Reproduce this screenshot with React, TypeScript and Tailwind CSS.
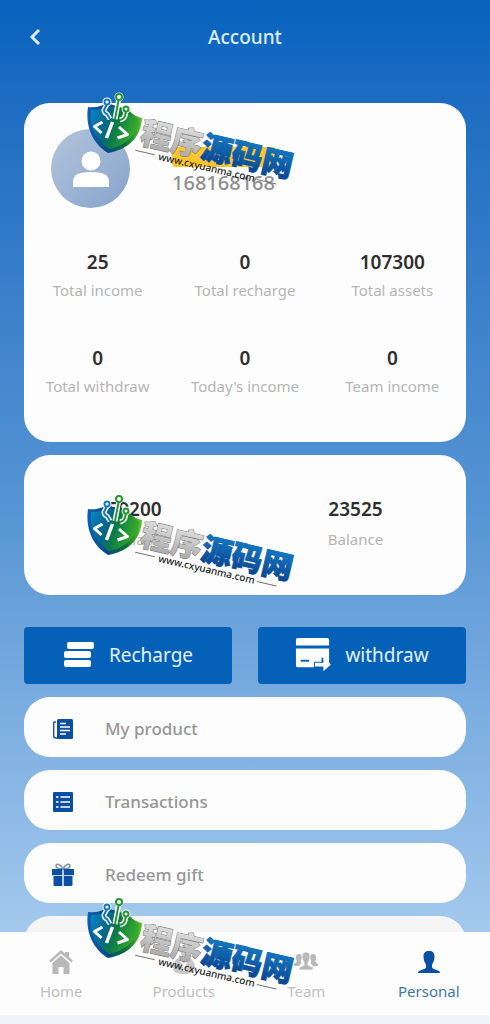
import { useId } from "react";

const stats = [
  { value: "25", label: "Total income" },
  { value: "0", label: "Total recharge" },
  { value: "107300", label: "Total assets" },
  { value: "0", label: "Total withdraw" },
  { value: "0", label: "Today's income" },
  { value: "0", label: "Team income" },
];

const balances = [
  { value: "59200", label: "Available" },
  { value: "23525", label: "Balance" },
];

function AvatarIcon() {
  return (
    <svg className="h-10 w-10" viewBox="0 0 40 40" fill="white">
      <circle cx="20" cy="12" r="9.5" />
      <path d="M2 38v-5c0-8 7-10 18-10s18 2 18 10v5z" />
    </svg>
  );
}

function RechargeIcon() {
  return (
    <svg className="h-8 w-8" viewBox="0 0 32 32" fill="white">
      <rect x="4" y="2" width="27" height="7" rx="2" />
      <rect x="1" y="11" width="27" height="7" rx="2" />
      <rect x="1" y="20" width="27" height="7" rx="2" />
    </svg>
  );
}

function WithdrawIcon() {
  return (
    <svg className="h-9 w-9" viewBox="0 0 38 36">
      <path d="M1 1q0-2 2-2h31q2 0 2 2v6H1z" fill="white" />
      <path d="M1 10h35v17H21v3H3q-2 0-2-2z" fill="white" />
      <path d="M6 23h9" stroke="#0560b8" strokeWidth="2" />
      <path d="M20 31v-7h8v-5l9 8-9 7v-3z" fill="#0560b8" />
      <path d="M21 29v-4h9v-5l8 7-8 7v-5z" fill="white" />
    </svg>
  );
}

function ProductIcon() {
  return (
    <svg className="h-5 w-5" viewBox="0 0 20 20">
      <path d="M3 3H1.500Q.7 3 .7 4v13q0 2 2 2H5" fill="none" stroke="#0b4fa3" strokeWidth="1.300" />
      <rect x="4" y="0" width="16" height="20" rx="1.500" fill="#0b4fa3" />
      <path d="M7 4.500h6M7 8h10M7 11.500h10M7 15h6" stroke="white" strokeWidth="1.300" />
    </svg>
  );
}

function ListIcon() {
  return (
    <svg className="h-5 w-5" viewBox="0 0 20 20">
      <rect x="0" y="0" width="20" height="20" rx="1" fill="#0b4fa3" />
      <path d="M3 5h2.500M7.500 5H17M3 10h2.500M7.500 10H17M3 15h2.500M7.500 15H17" stroke="white" strokeWidth="1.500" />
    </svg>
  );
}

function GiftIcon() {
  return (
    <svg className="h-6 w-6" viewBox="0 0 24 24">
      <path d="M12 6C10 1 5 0 5 3s4 3 7 3c3 0 7 0 7-3s-5-2-7 3z" fill="none" stroke="#7d93ad" strokeWidth="1.500" />
      <path d="M1 6h10.300v6.300H1zM12.700 6H23v6.300H12.700zM2.500 13h8.800v10H4q-1.500 0-1.500-1zM12.700 13h8.800v9q0 1-1.500 1h-7.300z" fill="#0b4fa3" />
    </svg>
  );
}

function HomeIcon() {
  return (
    <svg className="h-6 w-6" viewBox="0 0 24 24" fill="#b8b8b8">
      <path d="M12 0l4 3.500V2h4v5l4 3.800-1.600 1.800L12 3.500 1.600 12.600 0 10.800z" />
      <path d="M12 5.500l8.500 7.500v11h-6v-7h-5v7h-6V13z" />
    </svg>
  );
}

function ProductsIcon() {
  return (
    <svg className="h-6 w-6" viewBox="0 0 24 24" fill="#c8c8c8">
      <path d="M8 1h8l-2 5c6 2 9 7 9 11 0 5-3 7-11 7S1 22 1 17c0-4 3-9 9-11z" />
      <path d="M8.500 11l3.500 4 3.500-4M12 15v6M8.500 16h7" fill="none" stroke="white" strokeWidth="1.500" />
    </svg>
  );
}

function TeamIcon() {
  return (
    <svg className="h-6 w-6" viewBox="0 0 24 24" fill="#b8b8b8">
      <path d="M5 4c2 0 3 1 3 3s-1 3-1.500 4l1 2-2.500 3H0v-2l3-2.500C2 10 2 9 2 7s1-3 3-3zM19 4c-2 0-3 1-3 3s1 3 1.500 4l-1 2 2.500 3h5v-2l-3-2.500c1-1.500 1-2.500 1-4.500s-1-3-3-3z" />
      <path d="M12 2c3 0 4 2 4 4.500S15 11 14 12.500V15l5 2.500V20H5v-2.500L10 15v-2.500C9 11 8 9 8 6.500S9 2 12 2z" stroke="white" strokeWidth=".8" />
    </svg>
  );
}

function PersonIcon() {
  return (
    <svg className="h-6 w-6" viewBox="0 0 24 24" fill="#0b4fa3">
      <path d="M12 1c4 0 5.500 2 5.500 5.500 0 3-1 6-2.500 8 0 3 0 4 2 4.500l5 2q1 .5 1 2H1q0-1.500 1-2l5-2c2-.5 2-1.500 2-4.500-1.500-2-2.500-5-2.500-8C6.500 3 8 1 12 1z" />
    </svg>
  );
}

const links = [
  { label: "My product", icon: <ProductIcon /> },
  { label: "Transactions", icon: <ListIcon /> },
  { label: "Redeem gift", icon: <GiftIcon /> },
];

const tabs = [
  { label: "Home", icon: <HomeIcon />, active: false },
  { label: "Products", icon: <ProductsIcon />, active: false },
  { label: "Team", icon: <TeamIcon />, active: false },
  { label: "Personal", icon: <PersonIcon />, active: true },
];

function SiteMark({ className }: { className: string }) {
  const id = useId();

  return (
    <svg
      className={`pointer-events-none absolute left-[84px] h-[120px] w-[240px] ${className}`}
      viewBox="0 0 240 120"
      role="img"
      aria-label="程序源码网"
    >
      <defs>
        <linearGradient id={`${id}shield`} x1="0" y1="0" x2="1" y2="0.3">
          <stop offset="0" stopColor="#0b86cc" />
          <stop offset="0.4" stopColor="#06668a" />
          <stop offset="0.6" stopColor="#0b7a48" />
          <stop offset="1" stopColor="#34ab2c" />
        </linearGradient>
        <linearGradient id={`${id}rim`} x1="0" y1="0" x2="1" y2="0">
          <stop offset="0" stopColor="#0d5fb0" />
          <stop offset="0.4" stopColor="#0a4a86" />
          <stop offset="0.7" stopColor="#0c7034" />
          <stop offset="1" stopColor="#5cc22e" />
        </linearGradient>
        <linearGradient id={`${id}silver`} x1="0" y1="0" x2="0" y2="1">
          <stop offset="0.2" stopColor="#dedede" />
          <stop offset="1" stopColor="#a2a2a2" />
        </linearGradient>
        <linearGradient id={`${id}blue`} x1="0" y1="0" x2="0" y2="1">
          <stop offset="0.2" stopColor="#1279c2" />
          <stop offset="1" stopColor="#0b3a85" />
        </linearGradient>
      </defs>

      {/* shield */}
      <path
        d="M4 15C12 16 18 14 23 11L45 18C49 23 53 25 58 26C57 43 47 57 24 61C9 52 1 35 4 15Z"
        fill={`url(#${id}rim)`}
      />
      <path
        d="M7 18C14 18 19 17 24 14L43 20C47 25 51 27 55 28C53 42 44 53 25 57C12 49 5 35 7 18Z"
        fill={`url(#${id}shield)`}
      />

      {/* circuit */}
      <g fill="none" strokeLinejoin="round">
        <path d="M23 12l-3 6q0 3 3 4l3 5M35 6l-4 21M42 19l-1 5q-1 3-5 4" stroke="white" strokeWidth="5" />
        <circle cx="23" cy="10" r="4.500" fill="white" />
        <circle cx="35" cy="5" r="4.500" fill="white" />
        <circle cx="42" cy="17" r="4.500" fill="white" />
        <path d="M23 12l-3 6q0 3 3 4l3 5" stroke="#1478be" strokeWidth="2" />
        <path d="M35 6l-4 21M42 19l-1 5q-1 3-5 4" stroke="#23982f" strokeWidth="2" />
        <circle cx="23" cy="10" r="2.500" fill="white" stroke="#1478be" strokeWidth="2" />
        <circle cx="35" cy="5" r="3" fill="white" stroke="#23982f" strokeWidth="2" />
        <circle cx="42" cy="17" r="2.500" fill="white" stroke="#23982f" strokeWidth="2" />
        <path d="M18.500 30l-8 4.500 7 6.500M35 35l8.500 7.500-10 3.500" stroke="white" strokeWidth="3" />
        <path d="M28.500 30l-6 16" stroke="white" strokeWidth="3.500" />
      </g>

      {/* name and address */}
      <g transform="translate(55 51) rotate(13)">
        <g className="font-['Noto_Sans_CJK_SC',sans-serif] text-[31px] font-black" paintOrder="stroke">
          <text fill={`url(#${id}silver)`} stroke="#777777" strokeWidth="1">
            程序
          </text>
          <text x="62" fill={`url(#${id}blue)`} stroke="#1164ac" strokeWidth="1">
            源码网
          </text>
        </g>
        <text x="22" y="12" className="font-['Noto_Sans',sans-serif] text-[10px] font-medium" fill="#222222">
          www.cxyuanma.com
        </text>
        <path d="M-2 8h20M123 9h20" stroke="#777777" strokeWidth="1" />
      </g>
    </svg>
  );
}

export default function App() {
  return (
    <div className="relative flex h-screen flex-col overflow-hidden bg-linear-to-b from-[#0562bd] via-[#5695d4] to-[#b4d4f2] font-['Noto_Sans',sans-serif]">
      <header className="grid h-[74px] shrink-0 grid-cols-3 items-center px-6">
        <button type="button" aria-label="Back" className="flex h-8 w-8 items-center text-[#d9efff]">
          <svg className="h-5 w-5" viewBox="0 0 20 20" fill="none" stroke="currentColor" strokeWidth="3">
            <path d="M15 3L8 10l7 7" />
          </svg>
        </button>
        <h1 className="text-center text-[19px] font-medium text-[#d9efff]">Account</h1>
      </header>

      <main className="min-h-0 flex-1 overflow-hidden px-6 pt-[29px]">
        <section className="rounded-[26px] bg-[#fdfdfd] pb-[42px] pt-[26px]">
          <div className="flex items-center gap-[42px] px-[27px]">
            <div className="flex h-[79px] w-[79px] items-center justify-center rounded-full bg-linear-to-br from-[#b4c5dc] to-[#86a3cb]">
              <AvatarIcon />
            </div>
            <div className="pt-2">
              <div className="h-5 w-[104px] rounded-sm bg-[#fdc52c]" />
              <p className="text-[20px] font-medium leading-8 text-[#8f8f8f]">168168168</p>
            </div>
          </div>
          <dl className="mt-10 grid grid-cols-3 gap-y-10 text-center">
            {stats.map((s) => (
              <div key={s.label} className="flex flex-col-reverse">
                <dt className="text-[15px] leading-7 text-[#b5b5b5]">{s.label}</dt>
                <dd className="text-[19px] font-semibold leading-7 text-[#2e2e2e]">{s.value}</dd>
              </div>
            ))}
          </dl>
        </section>

        <section className="mt-[13px] rounded-[26px] bg-[#fdfdfd] py-10">
          <dl className="grid grid-cols-2 text-center">
            {balances.map((b) => (
              <div key={b.label} className="flex flex-col-reverse">
                <dt className="text-[15px] leading-8 text-[#b5b5b5]">{b.label}</dt>
                <dd className="text-[19px] font-semibold leading-7 text-[#2e2e2e]">{b.value}</dd>
              </div>
            ))}
          </dl>
        </section>

        <div className="mt-8 grid grid-cols-2 gap-[26px]">
          <button type="button" className="flex h-[57px] items-center justify-center gap-[14px] rounded bg-[#0560b8] text-[19px] text-[#e3f2ff]">
            <RechargeIcon />
            Recharge
          </button>
          <button type="button" className="flex h-[57px] items-center justify-center gap-[14px] rounded bg-[#0560b8] text-[19px] text-[#e3f2ff]">
            <WithdrawIcon />
            withdraw
          </button>
        </div>

        <nav className="mt-[13px] flex flex-col gap-[13px]">
          {links.map((l) => (
            <a
              key={l.label}
              href="#"
              className="flex h-[60px] items-center gap-[30px] rounded-[26px] bg-[#fdfdfd] px-[27px] pt-1 text-[17px] font-medium text-[#969696]"
            >
              <span className="flex w-6 justify-center">{l.icon}</span>
              {l.label}
            </a>
          ))}
          <div className="h-[60px] rounded-[26px] bg-[#f5f5f5]" />
        </nav>
      </main>

      <footer className="shrink-0 border-b-[9px] border-[#f1f4f8] bg-[#fdfdfd]">
        <nav className="grid h-[83px] grid-cols-4">
          {tabs.map((t) => (
            <a
              key={t.label}
              href="#"
              aria-current={t.active ? "page" : undefined}
              className={`flex flex-col items-center gap-[6px] pt-[18px] text-[15px] ${t.active ? "text-[#3f78a8]" : "text-[#bfbfbf]"}`}
            >
              {t.icon}
              {t.label}
            </a>
          ))}
        </nav>
      </footer>

      <SiteMark className="top-[92px]" />
      <SiteMark className="top-[494px]" />
      <SiteMark className="top-[897px]" />
    </div>
  );
}
